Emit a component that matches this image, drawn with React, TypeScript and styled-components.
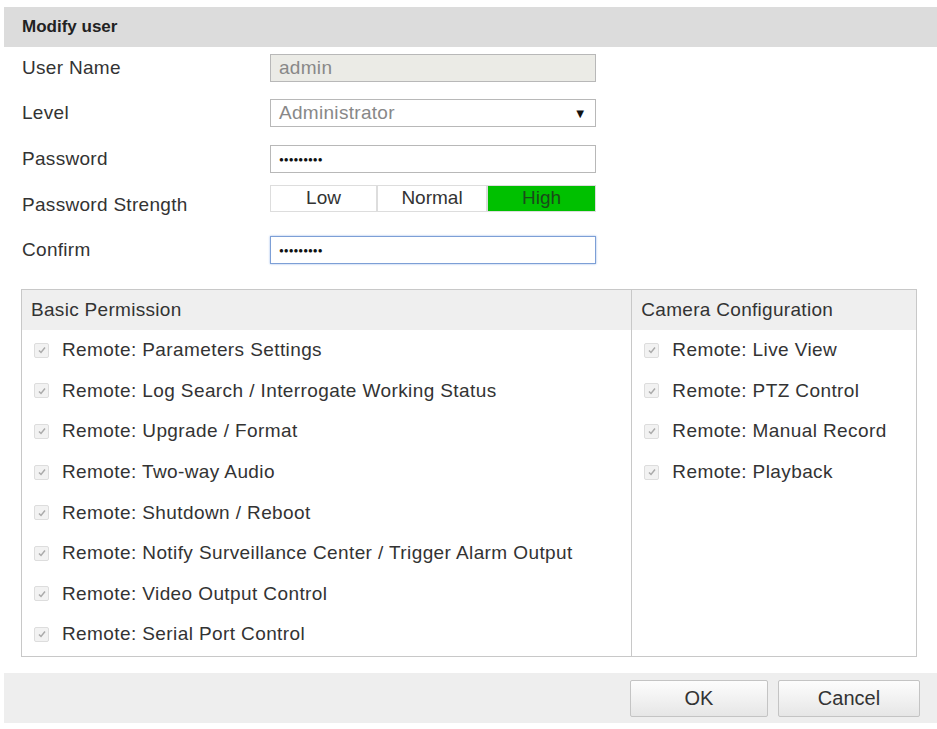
import React from "react";
import styled, { createGlobalStyle } from "styled-components";

const G = createGlobalStyle`
  body { margin: 0; background: #fff; font-family: "Liberation Sans", Arial, sans-serif; color: #333; }
`;
const Page = styled.div` padding: 7px 0 0 4px; width: 933px; `;
const Header = styled.div`
  height: 40px; background: #dcdcdc; display: flex; align-items: center; padding-left: 18px;
  font-weight: bold; font-size: 17px; color: #222;
`;
const Form = styled.div` padding: 0 0 0 18px; display: flex; flex-direction: column; `;
const Row = styled.div<{ h: number }>` height: ${p => p.h}px; display: flex; align-items: center; `;
const Label = styled.div` width: 248px; font-size: 19px; letter-spacing: 0.3px; color: #333; `;
const Field = styled.div<{ bg?: string; focus?: boolean; muted?: boolean }>`
  width: 326px; height: 28px; box-sizing: border-box; border: 1px solid ${p => p.focus ? "#7d9fd6" : "#b8b8b8"};
  background: ${p => p.bg || "#fff"}; display: flex; align-items: center; padding: 0 8px;
  font-size: 19px; letter-spacing: 0.3px; color: ${p => p.muted ? "#888" : "#222"}; justify-content: space-between;
  box-shadow: ${p => p.focus ? "0 0 2px #9ab8e8" : "none"};
`;
const Dots = styled.span` font-size: 8px; letter-spacing: 0; color: #111; font-weight: bold; `;
const Strength = styled.div` display: flex; width: 326px; height: 27px; `;
const Seg = styled.div<{ w: number; on?: boolean }>`
  width: ${p => p.w}px; border: 1px solid #ddd; box-sizing: border-box; display: flex; align-items: center;
  justify-content: center; font-size: 19px; background: ${p => p.on ? "#00c000" : "#fff"};
  color: ${p => p.on ? "#1a4a1a" : "#333"};
`;
const Box = styled.div`
  margin: 4px 0 0 17px; width: 896px; height: 368px; border: 1px solid #c8c8c8; box-sizing: border-box;
  display: flex;
`;
const Col = styled.div<{ w: number; last?: boolean }>`
  width: ${p => p.w}px; ${p => p.last ? "" : "border-right: 1px solid #c8c8c8;"} display: flex; flex-direction: column;
`;
const ColHead = styled.div`
  height: 40px; background: #efefef; display: flex; align-items: center; padding-left: 9px;
  font-size: 19px; letter-spacing: 0.3px; color: #333;
`;
const List = styled.div` display: flex; flex-direction: column; `;
const Item = styled.div`
  height: 40.6px; display: flex; align-items: center; padding-left: 12px;
  font-size: 19px; letter-spacing: 0.4px; color: #333;
`;
const Check = styled.span`
  width: 13px; height: 13px; border: 1px solid #ddd; border-radius: 2px; background: #f2f2f2; margin-right: 13px;
  display: flex; align-items: center; justify-content: center; flex: none;
`;
const Footer = styled.div`
  margin-top: 16px; height: 50px; background: #eeeeee; display: flex; align-items: center; justify-content: flex-end;
  padding-right: 17px; gap: 10px;
`;
const Btn = styled.button<{ w: number }>`
  width: ${p => p.w}px; height: 37px; border: 1px solid #c4c4c4; border-radius: 2px;
  background: linear-gradient(#fdfdfd, #e6e6e6); font-family: inherit; font-size: 20px; color: #333;
`;

const Tick = () => (
  <Check>
    <svg width="10" height="10" viewBox="0 0 10 10"><path d="M2 5.5 L4 7.5 L8 2.5" stroke="#aaa" strokeWidth="1.5" fill="none" /></svg>
  </Check>
);

const basic = [
  "Remote: Parameters Settings",
  "Remote: Log Search / Interrogate Working Status",
  "Remote: Upgrade / Format",
  "Remote: Two-way Audio",
  "Remote: Shutdown / Reboot",
  "Remote: Notify Surveillance Center / Trigger Alarm Output",
  "Remote: Video Output Control",
  "Remote: Serial Port Control",
];
const cam = ["Remote: Live View", "Remote: PTZ Control", "Remote: Manual Record", "Remote: Playback"];

export default function App() {
  return (
    <Page>
      <G />
      <Header>Modify user</Header>
      <Form>
        <Row h={42}><Label>User Name</Label><Field bg="#ebebe6" muted>admin</Field></Row>
        <Row h={48}><Label>Level</Label><Field muted>Administrator<span style={{ color: "#111", fontSize: 13 }}>▼</span></Field></Row>
        <Row h={44}><Label>Password</Label><Field><Dots>●●●●●●●●●</Dots></Field></Row>
        <Row h={34}><Label style={{ paddingTop: 14 }}>Password Strength</Label><Strength><Seg w={107}>Low</Seg><Seg w={110}>Normal</Seg><Seg w={109} on>High</Seg></Strength></Row>
        <Row h={70}><Label>Confirm</Label><Field focus><Dots>●●●●●●●●●</Dots></Field></Row>
      </Form>
      <Box>
        <Col w={610}>
          <ColHead>Basic Permission</ColHead>
          <List>{basic.map(t => <Item key={t}><Tick />{t}</Item>)}</List>
        </Col>
        <Col w={284} last>
          <ColHead>Camera Configuration</ColHead>
          <List>{cam.map(t => <Item key={t}><Tick />{t}</Item>)}</List>
        </Col>
      </Box>
      <Footer><Btn w={138}>OK</Btn><Btn w={142}>Cancel</Btn></Footer>
    </Page>
  );
}
